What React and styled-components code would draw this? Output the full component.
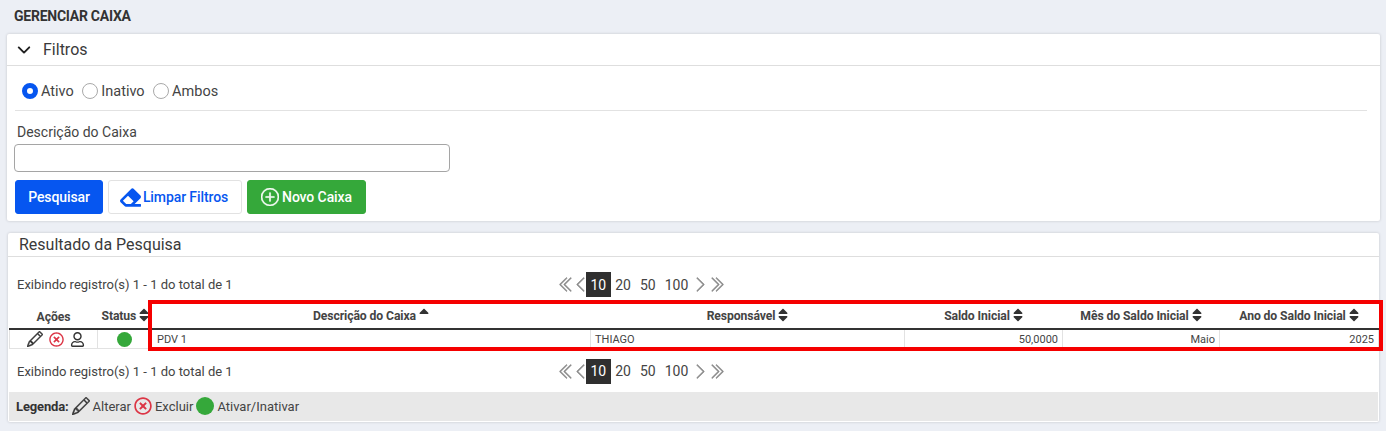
import React from 'react';
import styled, { createGlobalStyle } from 'styled-components';
import {
  BsChevronDown,
  BsChevronLeft,
  BsChevronRight,
  BsChevronDoubleLeft,
  BsChevronDoubleRight,
  BsPencil,
  BsPlusCircle,
} from 'react-icons/bs';
import { FaEraser, FaRegTimesCircle, FaRegUser, FaSort, FaSortUp } from 'react-icons/fa';

const GlobalStyle = createGlobalStyle`
  html, body {
    margin: 0;
    padding: 0;
    background: #eceff5;
    font-family: Roboto, "Liberation Sans", sans-serif;
    color: #3a3a3a;
    overflow: hidden;
  }
`;

const columns = [
  { label: 'Descrição do Caixa', value: 'PDV 1', width: 442, sort: 'up', indent: true },
  { label: 'Responsável', value: 'THIAGO', width: 314 },
  { label: 'Saldo Inicial', value: '50,0000', width: 158, right: true },
  { label: 'Mês do Saldo Inicial', value: 'Maio', width: 157, right: true },
  { label: 'Ano do Saldo Inicial', value: '2025', width: 159, right: true },
];

const Pager = () => (
  <PagerBar>
    <PagerArrow><BsChevronDoubleLeft /></PagerArrow>
    <PagerArrow $narrow><BsChevronLeft /></PagerArrow>
    <PageNumber $active>10</PageNumber>
    <PageNumber>20</PageNumber>
    <PageNumber>50</PageNumber>
    <PageNumber>100</PageNumber>
    <PagerArrow $narrow $after><BsChevronRight /></PagerArrow>
    <PagerArrow $after><BsChevronDoubleRight /></PagerArrow>
  </PagerBar>
);

const ResultInfo = ({ children, $top }) => (
  <InfoRow $top={$top}>
    <InfoText>{children}</InfoText>
    <Pager />
  </InfoRow>
);

const App = () => {
  return (
    <>
      <GlobalStyle />
      <Page>
        <Title>GERENCIAR CAIXA</Title>

        <Panel>
          <PanelHeader>
            <BsChevronDown />
            <span>Filtros</span>
          </PanelHeader>
          <FilterBody>
            <RadioRow>
              <RadioItem><RadioDot $checked />Ativo</RadioItem>
              <RadioItem><RadioDot />Inativo</RadioItem>
              <RadioItem><RadioDot />Ambos</RadioItem>
            </RadioRow>
            <FieldLabel>Descrição do Caixa</FieldLabel>
            <TextInput type="text" />
            <ButtonRow>
              <Button $variant="primary">Pesquisar</Button>
              <Button $variant="light"><FaEraser size={21} />Limpar Filtros</Button>
              <Button $variant="success"><BsPlusCircle size={18} strokeWidth={0.5} />Novo Caixa</Button>
            </ButtonRow>
          </FilterBody>
        </Panel>

        <ResultPanel>
          <ResultHeader>Resultado da Pesquisa</ResultHeader>
          <ResultBody>
            <ResultInfo $top={15}>Exibindo registro(s) 1 - 1 do total de 1</ResultInfo>
            <TableWrap>
              <Table>
                <thead>
                  <tr>
                    <HeadCell style={{ width: 88 }}>Ações</HeadCell>
                    <HeadCell style={{ width: 51 }}>Status<SortIcon><FaSort /></SortIcon></HeadCell>
                    {columns.map((col) => (
                      <HeadCell key={col.label} $indent={col.indent} style={{ width: col.width }}>
                        {col.label}
                        <SortIcon>
                          {col.sort === 'up' ? <FaSortUp /> : <FaSort />}
                        </SortIcon>
                      </HeadCell>
                    ))}
                  </tr>
                </thead>
                <tbody>
                  <tr>
                    <BodyCell $center>
                      <ActionIcons>
                        <BsPencil size={16} color="#333" strokeWidth={0.5} />
                        <FaRegTimesCircle size={15} color="#dc3545" />
                        <FaRegUser size={15} color="#333" />
                      </ActionIcons>
                    </BodyCell>
                    <BodyCell $center $indent><StatusDot $size={15} /></BodyCell>
                    {columns.map((col) => (
                      <BodyCell key={col.label} $right={col.right} $indent={col.indent}>{col.value}</BodyCell>
                    ))}
                  </tr>
                </tbody>
              </Table>
              <Highlight />
            </TableWrap>
            <ResultInfo $top={10}>Exibindo registro(s) 1 - 1 do total de 1</ResultInfo>
            <Legend>
              <LegendTitle>Legenda:</LegendTitle>
              <BsPencil size={18} color="#333" strokeWidth={0.4} />
              <span>Alterar</span>
              <FaRegTimesCircle size={18} color="#dc3545" />
              <span>Excluir</span>
              <StatusDot $size={18} />
              <span>Ativar/Inativar</span>
            </Legend>
          </ResultBody>
        </ResultPanel>
      </Page>
    </>
  );
};

export default App;

const Page = styled.div`
  width: 1386px;
  height: 431px;
  padding: 0 6px 0 7px;
  box-sizing: border-box;
  overflow: hidden;
`;

const Title = styled.h1`
  margin: 0;
  height: 34px;
  padding: 9px 0 0 7px;
  box-sizing: border-box;
  font-size: 14px;
  line-height: 15px;
  font-weight: 700;
  letter-spacing: -0.25px;
  color: #333;
`;

const Panel = styled.section`
  background: #fff;
  border-radius: 2px;
  box-shadow: 0 0 3px rgba(0, 0, 0, 0.18);
`;

const PanelHeader = styled.div`
  display: flex;
  align-items: center;
  gap: 12px;
  height: 31px;
  padding: 0 0 0 10px;
  border-bottom: 1px solid #dedede;
  font-size: 16px;
  color: #3a3a3a;

  > svg {
    width: 14px;
    height: 14px;
    stroke: #222;
    stroke-width: 1.2px;
  }
`;

const FilterBody = styled.div`
  padding: 0 7px 7px;
  height: 155px;
  box-sizing: border-box;
`;

const RadioRow = styled.div`
  display: flex;
  align-items: center;
  gap: 8.5px;
  height: 45px;
  margin: 0 6px 0 1px;
  padding: 6px 0 0 7px;
  box-sizing: border-box;
  border-bottom: 1px solid #e2e2e2;
`;

const RadioItem = styled.label`
  display: flex;
  align-items: center;
  gap: 3px;
  font-size: 14.5px;
  color: #444;
`;

const RadioDot = styled.span`
  width: 16px;
  height: 16px;
  box-sizing: border-box;
  border-radius: 50%;
  border: ${(p) => (p.$checked ? '5px solid #0656f0' : '1px solid #a9a9a9')};
  background: #fff;
`;

const FieldLabel = styled.div`
  margin: 13px 0 4px 3px;
  font-size: 14px;
  line-height: 16px;
  color: #444;
`;

const TextInput = styled.input`
  display: block;
  width: 436px;
  height: 28px;
  box-sizing: border-box;
  border: 1px solid #a5a5a5;
  border-radius: 4px;
  background: #fff;
`;

const buttonColors = {
  primary: 'background: #0656f0; color: #fff; border-color: #0656f0; width: 88px; gap: 3px;',
  light: 'background: #fff; color: #0656f0; border-color: #e2e2e2; width: 134px; gap: 2px; padding-right: 2px;',
  success: 'background: #35a83a; color: #fff; border-color: #35a83a; width: 119px; gap: 3px;',
};

const ButtonRow = styled.div`
  display: flex;
  gap: 5px;
  margin: 8px 0 0 1px;
`;

const Button = styled.button`
  display: flex;
  align-items: center;
  justify-content: center;
  height: 34px;
  padding: 0;
  border: 1px solid;
  border-radius: 3px;
  font-family: inherit;
  font-size: 14px;
  font-weight: 500;
  letter-spacing: -0.1px;
  ${(p) => buttonColors[p.$variant]}
`;

const ResultPanel = styled(Panel)`
  margin: 12px 1px 0;
  height: 189px;
`;

const ResultHeader = styled.div`
  height: 24px;
  padding-left: 11px;
  box-sizing: border-box;
  border-bottom: 1px solid #dedede;
  font-size: 16px;
  line-height: 24px;
  color: #3a3a3a;
`;

const ResultBody = styled.div`
  padding: 0 1px;
`;

const InfoRow = styled.div`
  display: grid;
  grid-template-columns: 548px auto;
  align-items: center;
  height: 25px;
  margin-top: ${(p) => p.$top}px;
`;

const InfoText = styled.span`
  padding-left: 8px;
  font-size: 13px;
  color: #444;
`;

const PagerBar = styled.div`
  display: flex;
  align-items: center;
`;

const PagerArrow = styled.span`
  display: flex;
  align-items: center;
  justify-content: center;
  width: ${(p) => (p.$narrow ? '11px' : '18px')};
  margin-left: ${(p) => (p.$after ? '2px' : '0')};

  > svg {
    width: 17px;
    height: 17px;
    flex: none;
    color: #8a8a8a;
    stroke: #8a8a8a;
    stroke-width: 0.5px;
  }
`;

const PageNumber = styled.span`
  display: flex;
  align-items: center;
  justify-content: center;
  height: 25px;
  padding: 0 4.5px;
  ${(p) => (p.$active ? 'background: #2f2f2f; color: #fff;' : 'color: #444;')}
  font-size: 14px;
`;

const TableWrap = styled.div`
  position: relative;
  margin-top: 5px;
`;

const Table = styled.table`
  border-collapse: collapse;
  table-layout: fixed;
  width: 1369px;
`;

const HeadCell = styled.th`
  height: 27px;
  padding: 3px ${(p) => (p.$indent ? '0 0 3px' : '4px 0')};
  box-sizing: border-box;
  border-bottom: 2px solid #333;
  font-size: 12.2px;
  font-weight: 700;
  letter-spacing: -0.1px;
  text-align: center;
  color: #444;
  white-space: nowrap;
`;

const SortIcon = styled.span`
  display: inline-block;
  margin-left: 3px;
  vertical-align: -3px;
  color: #333;

  > svg {
    width: 10px;
    height: 16px;
  }
`;

const BodyCell = styled.td`
  height: 19px;
  padding: 1px ${(p) => (p.$center && p.$indent ? '0 0 3px' : p.$indent ? '4px 0 8px' : '4px 0')};
  box-sizing: border-box;
  border: 1px solid #e2e2e2;
  border-top: none;
  font-size: 11px;
  color: #444;
  text-align: ${(p) => (p.$right ? 'right' : p.$center ? 'center' : 'left')};
`;

const ActionIcons = styled.span`
  display: flex;
  align-items: center;
  justify-content: center;
  gap: 6px;
  padding-left: 4px;
`;

const StatusDot = styled.span`
  display: inline-block;
  width: ${(p) => p.$size}px;
  height: ${(p) => p.$size}px;
  border-radius: 50%;
  background: #35a83a;
  vertical-align: middle;
`;

const Highlight = styled.div`
  position: absolute;
  left: 139px;
  right: -5px;
  top: -2px;
  height: 51px;
  box-sizing: border-box;
  border: 4px solid #f50000;
  pointer-events: none;
`;

const Legend = styled.div`
  display: flex;
  align-items: center;
  gap: 3px;
  height: 29px;
  margin-top: 8px;
  padding-left: 7px;
  background: #e8e8e8;
  font-size: 13px;
  color: #444;
`;

const LegendTitle = styled.strong`
  font-weight: 700;
  letter-spacing: -0.15px;
  color: #333;
`;
